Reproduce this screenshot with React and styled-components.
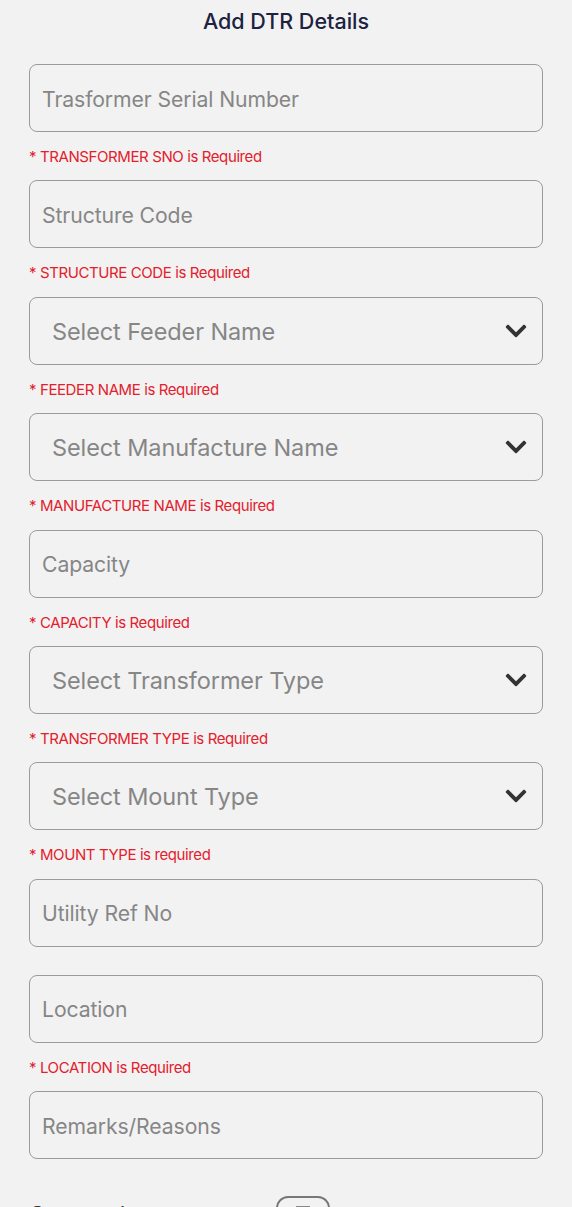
import React from "react";
import styled, { createGlobalStyle } from "styled-components";
import { FaChevronDown } from "react-icons/fa";

const Global = createGlobalStyle`
  html, body { margin: 0; padding: 0; background: #f2f2f2; }
  body { font-family: Inter, "Noto Sans", sans-serif; overflow: hidden; }
`;

const Page = styled.div`
  width: 572px;
  height: 1207px;
  overflow: hidden;
  background: #f2f2f2;
  box-sizing: border-box;
  padding: 0 29px;
`;

const Title = styled.h1`
  margin: 0;
  height: 64px;
  padding-top: 8px;
  box-sizing: border-box;
  text-align: center;
  font-size: 21.5px;
  line-height: 26px;
  font-weight: 500;
  color: #1c2340;
  letter-spacing: 0;
`;

const Field = styled.div`
  margin-bottom: ${(p) => (p.$error ? "0" : "28px")};
`;

const Box = styled.div`
  height: 68px;
  box-sizing: border-box;
  border: 1.5px solid #9b9b9b;
  border-radius: 8px;
  display: flex;
  align-items: center;
  justify-content: space-between;
  padding: 0 14px 0 ${(p) => (p.$select ? "22px" : "12px")};
`;

const Placeholder = styled.span`
  color: #868686;
  font-size: ${(p) => (p.$select ? "23.5px" : "21.2px")};
  letter-spacing: ${(p) => (p.$select ? "-0.1px" : "-0.1px")};
  padding-top: 1px;
`;

const Chevron = styled(FaChevronDown)`
  color: #333;
  width: 24px;
  height: 24px;
`;

const ErrorText = styled.div`
  height: 48.4px;
  box-sizing: border-box;
  padding-top: 16px;
  color: #e3202c;
  font-size: 15px;
  letter-spacing: -0.4px;
  line-height: 18px;
`;

const Bottom = styled.div`
  display: flex;
  align-items: flex-start;
  padding-top: 9px;
`;

const BottomLabel = styled.span`
  width: 247px;
  font-size: 22px;
  color: #333;
  padding-top: 5px;
`;

const CameraButton = styled.div`
  width: 54px;
  height: 40px;
  box-sizing: border-box;
  border: 2px solid #777;
  border-radius: 12px;
  display: flex;
  justify-content: center;
  padding-top: 8px;
`;

const CameraTop = styled.div`
  width: 14px;
  height: 2px;
  background: #888;
`;

const fields = [
  { ph: "Trasformer Serial Number", err: "* TRANSFORMER SNO is Required" },
  { ph: "Structure Code", err: "* STRUCTURE CODE is Required" },
  { ph: "Select Feeder Name", select: true, err: "* FEEDER NAME is Required" },
  { ph: "Select Manufacture Name", select: true, err: "* MANUFACTURE NAME is Required" },
  { ph: "Capacity", err: "* CAPACITY is Required" },
  { ph: "Select Transformer Type", select: true, err: "* TRANSFORMER TYPE is Required" },
  { ph: "Select Mount Type", select: true, err: "* MOUNT TYPE is required" },
  { ph: "Utility Ref No" },
  { ph: "Location", err: "* LOCATION is Required" },
  { ph: "Remarks/Reasons" },
];

export default function App() {
  return (
    <>
      <Global />
      <Page>
        <Title>Add DTR Details</Title>
        {fields.map((f) => (
          <Field key={f.ph} $error={!!f.err}>
            <Box $select={f.select}>
              <Placeholder $select={f.select}>{f.ph}</Placeholder>
              {f.select && <Chevron />}
            </Box>
            {f.err && <ErrorText>{f.err}</ErrorText>}
          </Field>
        ))}
        <Bottom>
          <BottomLabel>Captured</BottomLabel>
          <CameraButton>
            <CameraTop />
          </CameraButton>
        </Bottom>
      </Page>
    </>
  );
}
